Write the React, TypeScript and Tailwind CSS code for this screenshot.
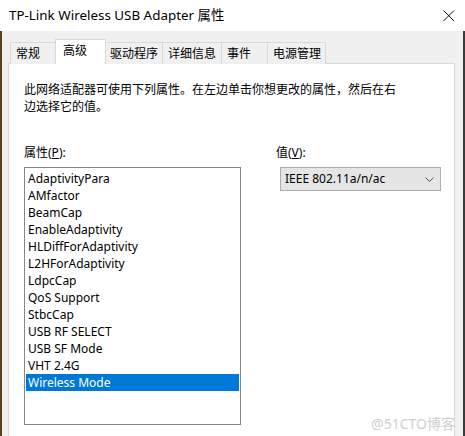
import React from "react";

const items = [
  "AdaptivityPara",
  "AMfactor",
  "BeamCap",
  "EnableAdaptivity",
  "HLDiffForAdaptivity",
  "L2HForAdaptivity",
  "LdpcCap",
  "QoS Support",
  "StbcCap",
  "USB RF SELECT",
  "USB SF Mode",
  "VHT 2.4G",
  "Wireless Mode",
];

const tabs = [
  { label: "常规", w: "w-[46px]" },
  { label: "高级", w: "w-[51px]", selected: true },
  { label: "驱动程序", w: "w-[59px]" },
  { label: "详细信息", w: "w-[60px]" },
  { label: "事件", w: "w-[47px]" },
  { label: "电源管理", w: "w-[59px]" },
];

export default function App() {
  return (
    <div
      className="w-[465px] h-[436px] overflow-hidden bg-[#f0f0f0] flex flex-col text-[12px] text-black relative"
      style={{ fontFamily: '"Noto Sans", "Noto Sans CJK SC", sans-serif' }}
    >
      {/* Title bar */}
      <div className="h-[31px] bg-white flex items-center shrink-0">
        <div className="pl-[9px] text-[13.4px] leading-none flex-1">TP-Link Wireless USB Adapter 属性</div>
        <div className="mr-[10px] flex items-center">
          <svg width="12" height="12" viewBox="0 0 12 12">
            <path d="M0.5 0.5 L11 11 M11 0.5 L0.5 11" stroke="#111" strokeWidth="1" fill="none" />
          </svg>
        </div>
      </div>

      {/* Body */}
      <div className="flex flex-1 min-h-0">
        <div className="w-[2px] bg-[#5b3f22]" />
        <div className="flex-1 flex flex-col pl-[6px] pr-[8px] pt-[9px]">
          {/* Tabs */}
          <div className="flex items-end h-[24px] pl-[2px] relative z-10 -mb-px">
            {tabs.map((t) =>
              t.selected ? (
                <div
                  key={t.label}
                  className={`${t.w} h-[25px] bg-white border border-b-0 border-[#d9d9d9] pl-[7px] pt-[4px] leading-[14px] -mx-px relative z-10`}
                >
                  {t.label}
                </div>
              ) : (
                <div
                  key={t.label}
                  className={`${t.w} h-[22px] bg-[#f0f0f0] border border-b-0 border-[#d9d9d9] pl-[5px] pt-[4px] leading-[14px] -ml-px first:ml-0`}
                >
                  {t.label}
                </div>
              )
            )}
          </div>

          {/* Panel */}
          <div className="flex-1 bg-white border border-[#d9d9d9] border-b-0 pl-[15px] pt-[17px]">
            <div className="leading-[17px] w-[380px]">
              此网络适配器可使用下列属性。在左边单击你想更改的属性，然后在右
              <br />
              边选择它的值。
            </div>

            <div className="flex mt-[29px]">
              <div className="w-[217px] flex flex-col">
                <div className="leading-[17px] h-[23px]">
                  属性(<span className="underline">P</span>):
                </div>
                <div className="h-[258px] border border-[#828790] px-px pt-[2px]">
                  {items.map((it) => (
                    <div
                      key={it}
                      className={`h-[17px] leading-[17px] pl-[2px] whitespace-nowrap ${
                        it === "Wireless Mode" ? "bg-[#0078d7] text-white" : ""
                      }`}
                    >
                      {it}
                    </div>
                  ))}
                </div>
              </div>
              <div className="ml-[35px] flex flex-col">
                <div className="leading-[17px] h-[23px]">
                  值(<span className="underline">V</span>):
                </div>
                <div className="ml-[4px] w-[161px] h-[24px] bg-[#e5e5e5] border border-[#adadad] flex items-center pl-[4px] pr-[6px]">
                  <span className="flex-1">IEEE 802.11a/n/ac</span>
                  <svg width="9" height="5" viewBox="0 0 9 5">
                    <path d="M0.5 0.5 L4.5 4.5 L8.5 0.5" stroke="#555" strokeWidth="1" fill="none" />
                  </svg>
                </div>
              </div>
            </div>
          </div>
        </div>
        <div className="w-[2px] bg-[#3a3a3a]" />
      </div>

      {/* Watermark */}
      <div className="absolute right-[10px] bottom-[5px] text-[14px] text-[#cfcfcf] leading-none">@51CTO博客</div>
    </div>
  );
}
